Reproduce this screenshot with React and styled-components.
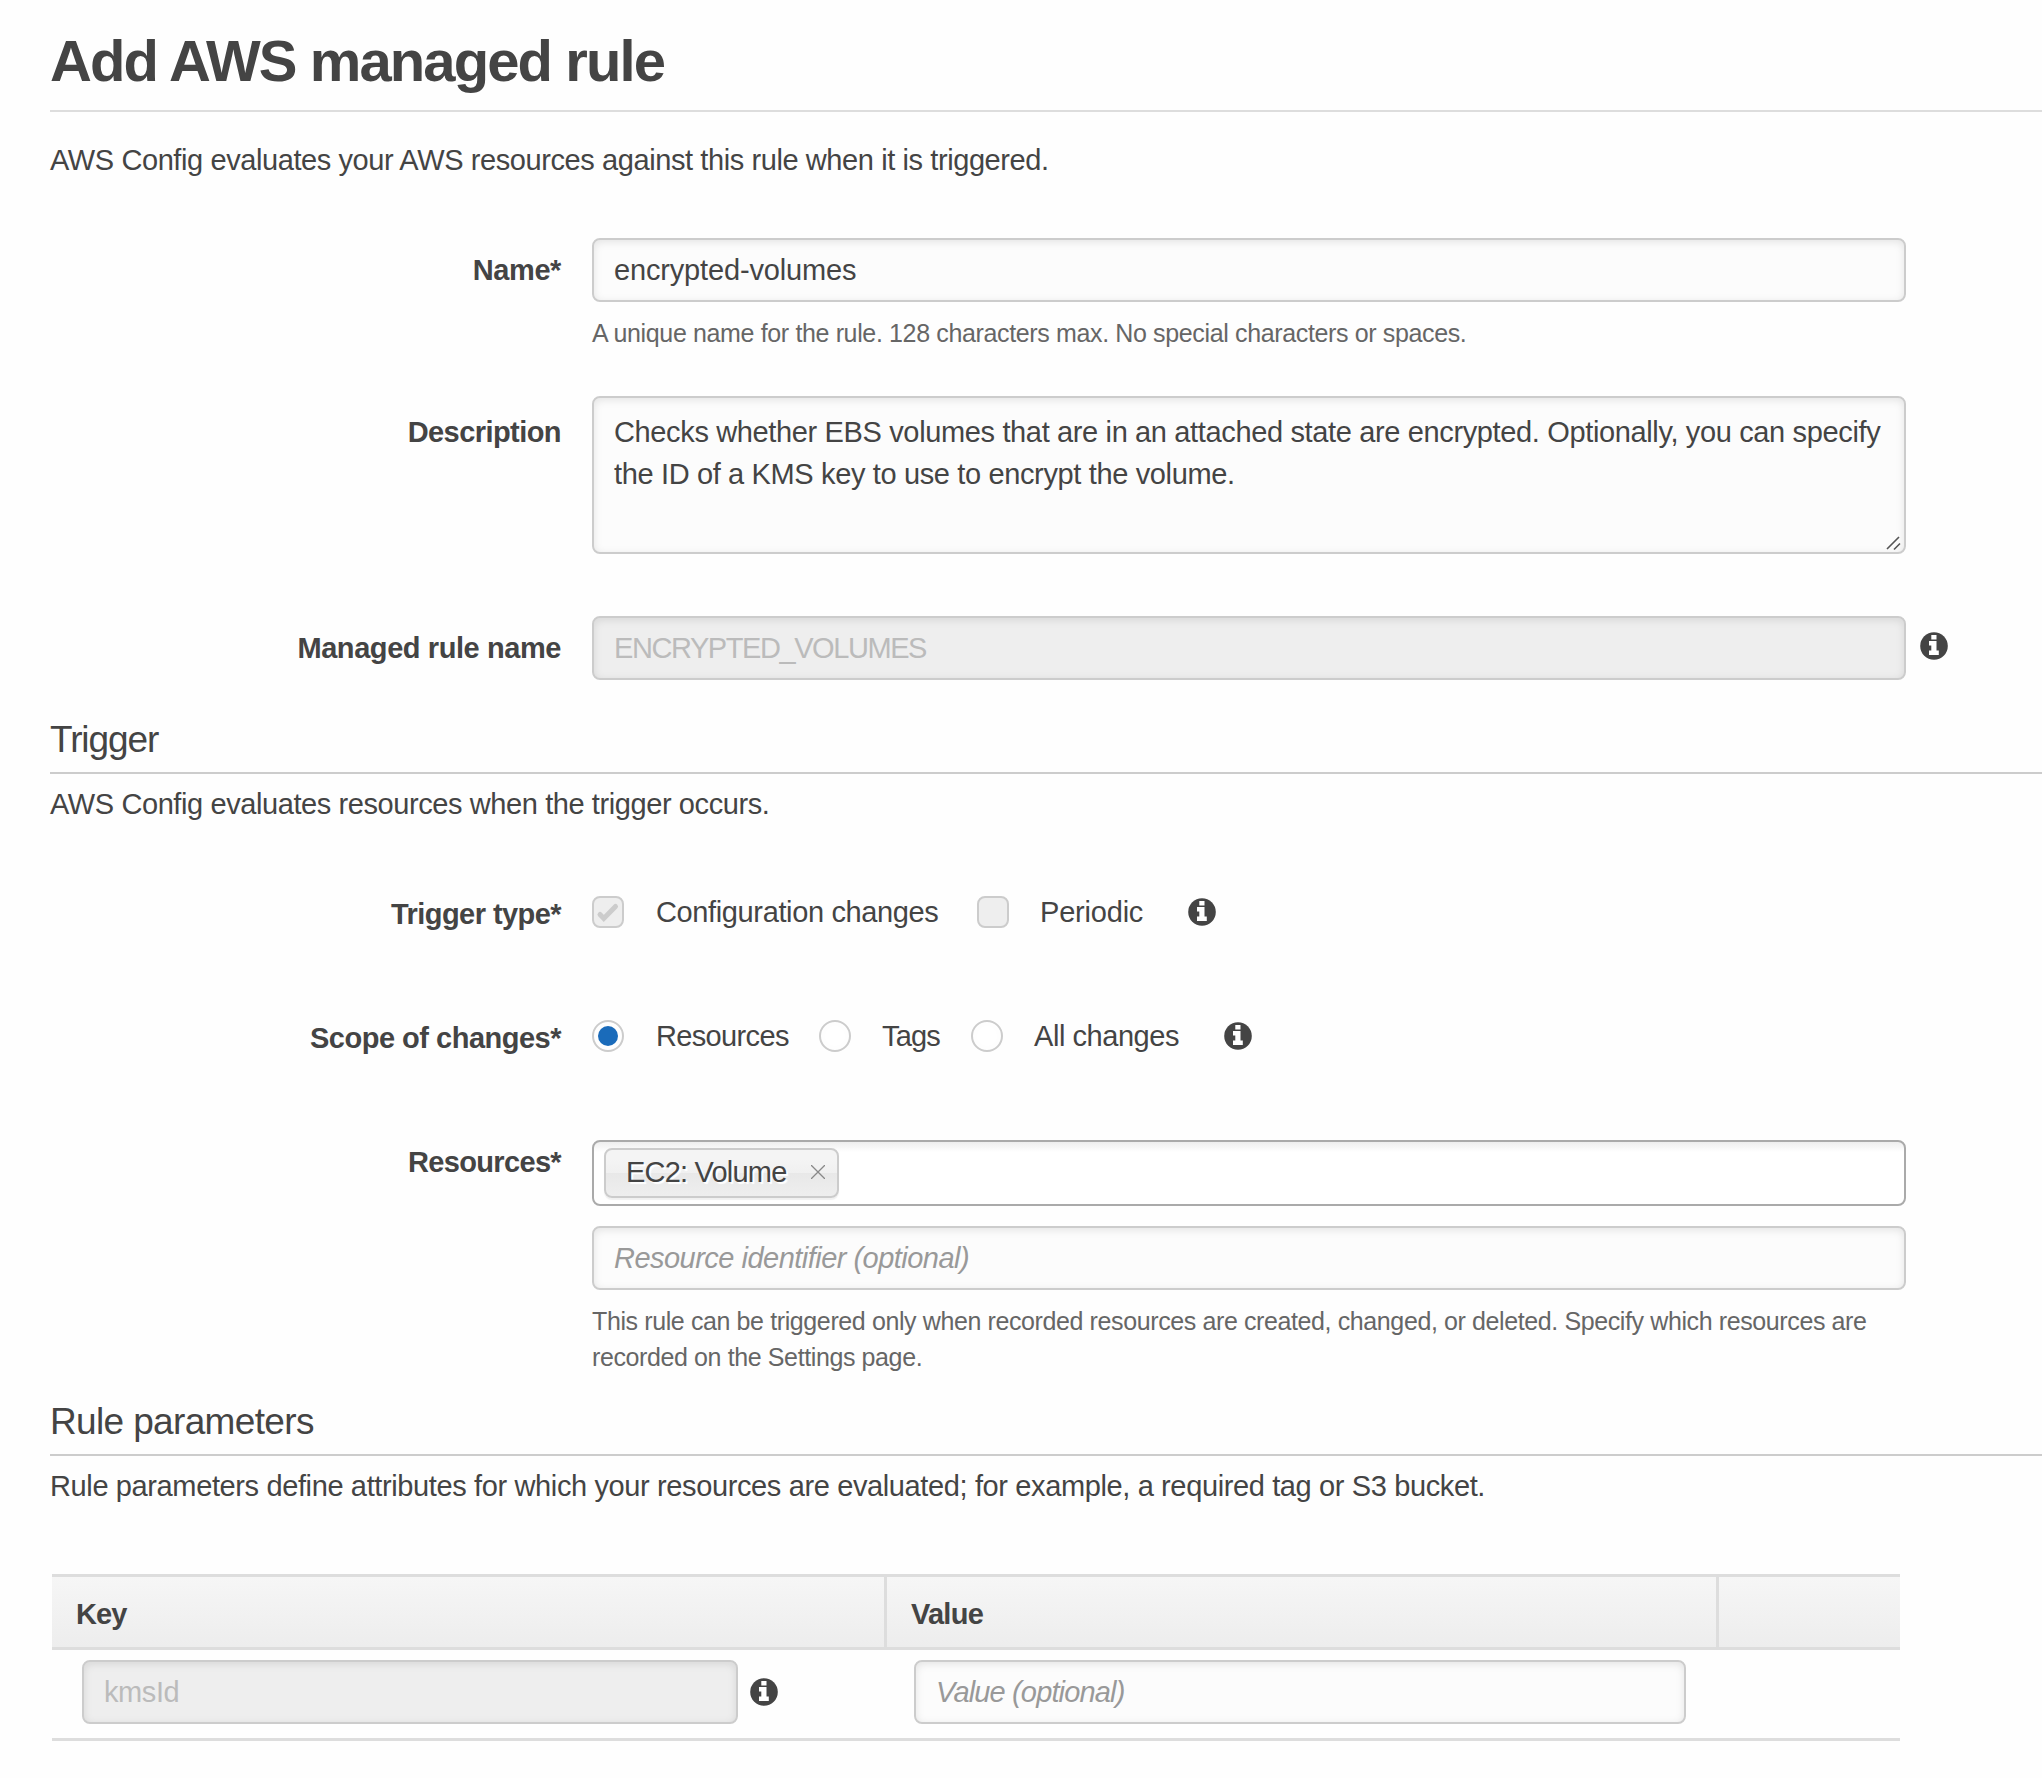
import React from "react";
import styled, { createGlobalStyle, css } from "styled-components";

const GlobalStyle = createGlobalStyle`
  * { box-sizing: border-box; }
  html, body { margin: 0; background: #fefefe; }
  body { overflow: hidden; }
  body, input, textarea {
    font-family: "Liberation Sans", Helvetica, Arial, sans-serif;
    font-size: 29px;
    color: #444;
  }
`;

const tracking = css`
  letter-spacing: ${(p) => p.$track || 0}px;
`;

const Page = styled.main`
  display: flex;
  flex-direction: column;
  width: 2042px;
  height: 1778px;
  padding-left: 50px;
  overflow: hidden;
`;

const Title = styled.h1`
  margin: 0;
  height: 112px;
  padding-top: 31px;
  font-size: 58px;
  line-height: 60px;
  ${tracking}
  border-bottom: 2px solid #ddd;
`;

const Intro = styled.p`
  margin: 0;
  padding-top: ${(p) => p.$top}px;
  height: ${(p) => p.$height}px;
  line-height: 42px;
  white-space: nowrap;
  ${tracking}
`;

const SectionTitle = styled.h2`
  margin: 0;
  height: 58px;
  font-size: 37px;
  font-weight: 400;
  line-height: 48px;
  ${tracking}
  border-bottom: 2px solid #ccc;
`;

const Row = styled.div`
  display: grid;
  grid-template-columns: 511px 1314px auto;
  column-gap: 31px;
  align-items: start;
  height: ${(p) => p.$height}px;
`;

const Label = styled.label`
  margin-top: ${(p) => p.$top || 0}px;
  font-weight: 700;
  line-height: 42px;
  text-align: right;
  ${tracking}
`;

const field = css`
  display: block;
  width: ${(p) => p.$width || 1314}px;
  margin: 0;
  border: 2px solid #ccc;
  border-radius: 8px;
  outline: none;
  background: #fcfcfc;
  box-shadow: inset 0 2px 8px rgba(0, 0, 0, 0.1);
  ${tracking}
  &:disabled {
    background: #eee;
    color: #bbb;
    opacity: 1;
  }
  &::placeholder {
    color: #999;
    font-style: italic;
    opacity: 1;
  }
`;

const Input = styled.input`
  ${field}
  height: 64px;
  padding: 0 20px;
`;

const AreaWrap = styled.div`
  position: relative;
  height: 158px;
`;

const Area = styled.textarea`
  ${field}
  height: 158px;
  padding: 13px 10px 0 20px;
  line-height: 42px;
  resize: none;
  overflow: hidden;
`;

const Grip = styled.svg`
  position: absolute;
  right: 4px;
  bottom: 3px;
  width: 16px;
  height: 16px;
`;

const Hint = styled.p`
  margin: 0;
  padding-top: 13px;
  color: #666;
  font-size: 25px;
  line-height: 36px;
  white-space: nowrap;
  ${tracking}
`;

const InfoSvg = styled.svg`
  display: block;
  flex: none;
  width: 28px;
  height: 28px;
  margin: ${(p) => p.$margin || 0};
`;

const Options = styled.div`
  display: flex;
  align-items: center;
  height: 32px;
  white-space: nowrap;
`;

const Option = styled.label`
  display: flex;
  gap: ${(p) => p.$gap || 31}px;
  width: ${(p) => p.$width}px;
  height: 32px;
  line-height: 33px;
  ${tracking}
`;

const CheckMark = styled.span`
  display: flex;
  align-items: center;
  justify-content: center;
  flex: none;
  width: 32px;
  height: 32px;
  border: 2px solid #ccc;
  border-radius: 8px;
  background: #eee;
`;

const RadioMark = styled.span`
  flex: none;
  width: 32px;
  height: 32px;
  padding: 4px;
  border: 2px solid #ccc;
  border-radius: 50%;
  background: ${(p) => (p.$on ? "#1a6bba" : "#fff")};
  background-clip: content-box;
`;

const TokenField = styled.div`
  display: flex;
  height: 66px;
  padding: 6px 10px;
  margin-bottom: 20px;
  border: 2px solid #aaa;
  border-radius: 8px;
  background: linear-gradient(#eee 0, #fff 10px);
`;

const Token = styled.span`
  display: flex;
  align-items: center;
  justify-content: space-between;
  width: 235px;
  height: 50px;
  padding: 0 12px 1px 20px;
  border: 2px solid #ccc;
  border-radius: 8px;
  background: linear-gradient(#f4f4f4 20%, #f0f0f0 50%, #e8e8e8 50%, #eee);
  box-shadow: 0 2px 1px rgba(0, 0, 0, 0.06);
  text-shadow: 2px 2px 1px #fff;
  ${tracking}
`;

const TokenClose = styled.svg`
  width: 14px;
  height: 14px;
  margin-bottom: 2px;
  stroke: #888;
  stroke-width: 1.3;
`;

const Table = styled.section`
  width: 1848px;
  margin-left: 2px;
`;

const HeadRow = styled.div`
  display: grid;
  grid-template-columns: 835px 832px 1fr;
  height: 76px;
  border-top: 3px solid #ddd;
  border-bottom: 3px solid #ddd;
  background: linear-gradient(#f6f6f6, #ededed);
`;

const HeadCell = styled.div`
  padding: 16px 24px 0;
  font-weight: 700;
  line-height: 42px;
  ${tracking}
  border-right: ${(p) => (p.$last ? 0 : 3)}px solid #ddd;
`;

const BodyRow = styled.div`
  display: grid;
  grid-template-columns: 832px 1fr;
  height: 91px;
  padding: 10px 30px 0;
  border-bottom: 3px solid #ddd;
`;

const KeyCell = styled.div`
  display: flex;
  align-items: flex-start;
`;

function Info({ margin }) {
  return (
    <InfoSvg viewBox="0 0 28 28" $margin={margin} aria-label="Info">
      <circle cx="14" cy="14" r="13.8" fill="#444" />
      <path d="M11.3 3.1h5.2v4.5h-5.2zM9 9h7.5v9.6h2.3v4.5H9v-4.5h2.3v-5.2H9z" fill="#fff" />
    </InfoSvg>
  );
}

export default function App() {
  return (
    <>
      <GlobalStyle />
      <Page>
        <Title $track={-1.9}>Add AWS managed rule</Title>
        <Intro $top={27} $height={126} $track={-0.41}>
          AWS Config evaluates your AWS resources against this rule when it is triggered.
        </Intro>

        <Row $height={158}>
          <Label $top={11} $track={-0.4}>Name*</Label>
          <div>
            <Input readOnly value="encrypted-volumes" $track={-0.16} />
            <Hint $track={-0.36}>
              A unique name for the rule. 128 characters max. No special characters or spaces.
            </Hint>
          </div>
        </Row>
        <Row $height={220}>
          <Label $top={15} $track={-0.56}>Description</Label>
          <AreaWrap>
            <Area
              readOnly
              $track={-0.36}
              value="Checks whether EBS volumes that are in an attached state are encrypted. Optionally, you can specify the ID of a KMS key to use to encrypt the volume."
            />
            <Grip viewBox="0 0 16 16" stroke="#555" strokeWidth="1.6" fill="none">
              <path d="M1 14L13 2M8 14.5L14 8.5" />
            </Grip>
          </AreaWrap>
        </Row>
        <Row $height={100}>
          <Label $top={11} $track={-0.42}>Managed rule name</Label>
          <Input disabled value="ENCRYPTED_VOLUMES" $track={-1.43} />
          <Info margin="16px 0 0 -17px" />
        </Row>

        <SectionTitle $track={-1.1}>Trigger</SectionTitle>
        <Intro $top={9} $height={122} $track={-0.41}>
          AWS Config evaluates resources when the trigger occurs.
        </Intro>

        <Row $height={124}>
          <Label $top={-3} $track={-0.56}>Trigger type*</Label>
          <Options>
            <Option $width={385} $gap={32} $track={-0.37}>
              <CheckMark>
                <svg width="28" height="28" viewBox="0 0 28 28">
                  <path d="M6 16.5l3.8 4L21.5 8.5" fill="none" stroke="#ccc" strokeWidth="5" strokeLinecap="round" />
                </svg>
              </CheckMark>
              Configuration changes
            </Option>
            <Option $width={211} $track={-0.2}>
              <CheckMark />
              Periodic
            </Option>
            <Info />
          </Options>
        </Row>
        <Row $height={120}>
          <Label $top={-3} $track={-0.5}>Scope of changes*</Label>
          <Options>
            <Option $width={227} $gap={32} $track={-0.65}>
              <RadioMark $on />
              Resources
            </Option>
            <Option $width={152} $track={-0.8}>
              <RadioMark />
              Tags
            </Option>
            <Option $width={253} $track={-0.45}>
              <RadioMark />
              All changes
            </Option>
            <Info />
          </Options>
        </Row>
        <Row $height={258}>
          <Label $top={1} $track={-0.65}>Resources*</Label>
          <div>
            <TokenField>
              <Token $track={-0.8}>
                EC2: Volume
                <TokenClose viewBox="0 0 14 14">
                  <path d="M0 0L14 14M14 0L0 14" />
                </TokenClose>
              </Token>
            </TokenField>
            <Input placeholder="Resource identifier (optional)" $track={-0.52} />
            <Hint $track={-0.39}>
              This rule can be triggered only when recorded resources are created, changed, or deleted. Specify which resources are
              <br />
              recorded on the Settings page.
            </Hint>
          </div>
        </Row>

        <SectionTitle $track={-0.65}>Rule parameters</SectionTitle>
        <Intro $top={9} $height={118} $track={-0.375}>
          Rule parameters define attributes for which your resources are evaluated; for example, a required tag or S3 bucket.
        </Intro>

        <Table>
          <HeadRow>
            <HeadCell $track={-0.9}>Key</HeadCell>
            <HeadCell $track={-0.75}>Value</HeadCell>
            <HeadCell $last />
          </HeadRow>
          <BodyRow>
            <KeyCell>
              <Input disabled $width={656} value="kmsId" $track={-0.4} />
              <Info margin="18px 0 0 12px" />
            </KeyCell>
            <Input $width={772} placeholder="Value (optional)" $track={-0.85} />
          </BodyRow>
        </Table>
      </Page>
    </>
  );
}
